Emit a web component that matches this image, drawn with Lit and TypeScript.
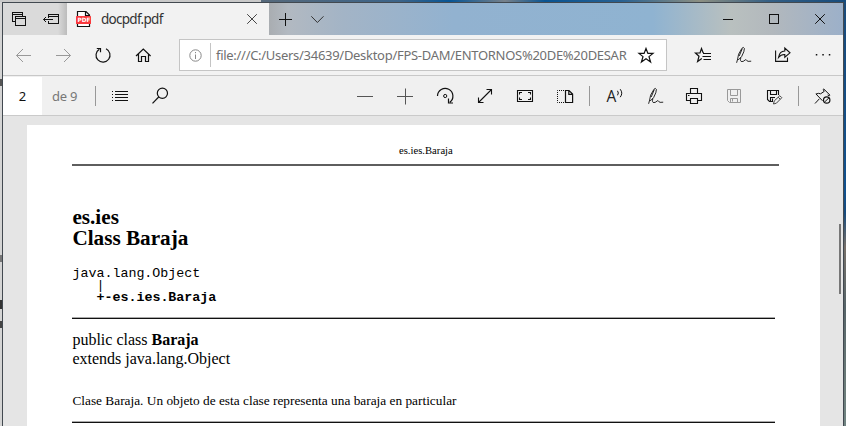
import { LitElement, html, css, svg } from "lit";
import { customElement } from "lit/decorators.js";

const pen = svg`<path stroke-width="0.9" d="M5.6 19.8L6.6 16.2L7.6 11.2L11 5.2Q12.6 3.6 13.4 5.4L12.8 8.8L10.6 13.6L7.2 17L6.6 16.2M11.2 5.8L8.2 13M9.8 14.5Q8.8 18.8 11 18.6T14.2 16.8Q15.4 16.4 15.8 17.6T20.2 18.2"/>`;

const glyphs: Record<string, unknown> = {
  back: svg`<path d="M19 12.5H4.5M11 6L4.5 12.5L11 19"/>`,
  forward: svg`<path d="M4 12.5H18.5M12 6L18.5 12.5L12 19"/>`,
  refresh: svg`<path stroke-width="1.2" d="M14 5.8A7 7 0 1 1 7.3 6.2M4.8 5.5H8.5V9.3"/>`,
  home: svg`<path stroke-width="1.2" d="M4 13L11.3 6L18.6 13M6.5 11V18.5H9.5V13.5H13.5V18.5H16.5V11"/>`,
  info: svg`<circle cx="12.5" cy="12.5" r="5.7"/><path d="M12.5 11.5V16M12.5 9V10.2"/>`,
  star: svg`<path stroke-width="1.2" d="M12 5.5L13.9 10.4H19L15 13.6L16.6 19L12 15.8L7.4 19L9 13.6L5 10.4H10.1Z"/>`,
  hub: svg`<path stroke-width="1.2" d="M12.8 9.5L12 9.5L10.5 5.5L9 10H4.5L8 13.2L6.6 18.5L10.8 15.5"/><path d="M12 10.5H20M11.5 13.5H20M12.5 16.5H20"/>`,
  pen,
  share: svg`<path stroke-width="1.1" d="M4.6 7.5V18.4H16.5V14.5M7.5 14.5Q8.5 8 13.8 8V5L19 9.8L13.8 14.2V11.5Q10 11.3 7.5 14.5Z"/>`,
  dots: svg`<path stroke="none" fill="#111" d="M4.8 11h1.5v1.5h-1.5zM11.3 11h1.5v1.5h-1.5zM17.8 11h1.5v1.5h-1.5z"/>`,
  list: svg`<path shape-rendering="crispEdges" d="M7 7.5H20M7 10.5H20M7 13.5H20M7 16.5H20M4 7.5H5M4 10.5H5M4 13.5H5M4 16.5H5"/>`,
  search: svg`<circle stroke-width="1.2" cx="14.4" cy="9.3" r="5.1"/><path stroke-width="1.2" d="M10.7 13L4.5 19.3"/>`,
  minus: svg`<path stroke="#555" d="M4 12.5H20"/>`,
  plus: svg`<path stroke="#555" d="M4 12.5H20M12.5 4.5V20.5"/>`,
  rotate: svg`<path stroke-width="1.2" d="M4.5 12A7.7 7.7 0 1 1 16.8 18.3M15.5 14.5V19H20"/><circle cx="12.2" cy="12" r="1.6"/>`,
  expand: svg`<path stroke-width="1.1" d="M5.5 18.5L18.5 5.5M13.5 5.5H18.5V10.5M5.5 13.5V18.5H10.5"/>`,
  fit: svg`<path stroke-width="1.1" d="M4.5 6.5H19.5V17.5H4.5ZM6.5 10.5V8.5H9M15 8.5H17.5V10.5M17.5 13.5V15.5H15M9 15.5H6.5V13.5"/>`,
  pages: svg`<path stroke-dasharray="1 1" d="M11 6.5H4.5V18.5H11"/><path stroke-width="1.2" d="M12.5 6.5H16L19.6 10V18.5H12.5ZM15.8 6.5V10.3H19.6"/>`,
  read: svg`<text x="3.6" y="18.4" class="letter">A</text><path d="M14.5 6.8Q16.2 9 14.5 11.3M17.2 5.2Q20.3 9.2 17.2 13.2"/>`,
  print: svg`<path stroke-width="1.1" d="M7.5 9.5V4.5H14.5V9.5M7.5 16.5H3.5V9.5H18.5V16.5H14.5M7.5 14.5H14.5V19.5H7.5ZM5 11.5H6.5"/>`,
  save: svg`<path stroke="#999" d="M4.5 5.5H17.5V18.5H6.5L4.5 16.5ZM7.5 6V11.5H14.5V6M7.5 18.5V14.5H14.5V18.5M9.5 15V17.5"/>`,
  saveEdit: svg`<path stroke-width="1.1" d="M10 17.5H6.5L4.5 15.5V6.5H15.5V11M7.5 6.5V10.5H13.5V6.5M7.5 17.5V13.5H12M9.5 14.5V17"/><path stroke="#444" d="M10.5 20L11.2 17L16.8 11.7L18.8 13.7L13.4 19.2ZM15.2 13.2L17.2 15.2"/>`,
  pin: svg`<path d="M4 19.5L8.4 14.8M4.8 9.8L11.5 16.8M5 10Q7.8 8.8 9.6 9.8L13.2 7.4L12.2 5.4L12.8 5L19 11.2L18.4 11.8L16.6 11"/><circle stroke-width="1.2" cx="15.7" cy="16" r="3.2"/><path d="M13.4 18.2L18 13.8"/>`,
  tabs: svg`<path shape-rendering="crispEdges" d="M8 14.5H5.5V5.5H15.5V9M5.5 7.5H15.5M8.5 9.5H18.5V18.5H8.5ZM8.5 11.5H18.5"/>`,
  aside: svg`<path shape-rendering="crispEdges" d="M9.5 10.5V7.5H19.5V16.5H9.5V14M9.5 9.5H19.5"/><path d="M14 12.5H4.5M7 10L4.5 12.5L7 15"/>`,
  close: svg`<path d="M7.2 7.2L16.8 16.8M16.8 7.2L7.2 16.8"/>`,
  newTab: svg`<path shape-rendering="crispEdges" d="M6 12.5H19M12.5 6V19"/>`,
  chevron: svg`<path d="M6.3 9.3L12.4 15.5L18.5 9.3"/>`,
  min: svg`<path shape-rendering="crispEdges" d="M7 12.5H17"/>`,
  max: svg`<path shape-rendering="crispEdges" d="M7.5 7.5H16.5V16.5H7.5Z"/>`,
  pdf: svg`<path fill="#fff" stroke="#111" stroke-width="1.2" d="M5.5 4.5H14L17.5 8V19.5H5.5ZM13.5 4.5V8.5H17.5"/><rect x="4" y="9" width="15" height="8" rx=".6" fill="#f9383c" stroke="none"/><text x="5.5" y="15.1" class="pdf">PDF</text>`,
};

@customElement("glyph-icon")
class GlyphIcon extends LitElement {
  static properties = { name: { type: String } };
  declare name: string;
  static styles = css`
    :host { display: flex; width: 40px; flex: none; align-items: center; justify-content: center; color: #111; }
    svg { width: 24px; height: 24px; fill: none; stroke: currentColor; stroke-width: 1; overflow: visible; }
    .letter { font: 15.5px "Open Sans", sans-serif; fill: #222; stroke: none; }
    .pdf { font: bold 5.8px "DejaVu Sans", sans-serif; fill: #fff; stroke: none; }
  `;
  render() {
    return html`<svg viewBox="0 0 24 24">${glyphs[this.name]}</svg>`;
  }
}

const icons = (names: string[]) => names.map((n) => html`<glyph-icon name=${n}></glyph-icon>`);

@customElement("app-root")
class AppRoot extends LitElement {
  static styles = css`
    :host {
      display: flex; box-sizing: border-box; width: 846px; height: 426px; overflow: hidden; padding: 2px 2px 0;
      font-family: "Noto Sans", "Open Sans", sans-serif; color: #222;
      background:
        linear-gradient(90deg, #c9c9c9 0 261px, #56697b 261px, #3c6489 400px, #075595 450px, #77818b 505px, #095492 545px, #286192 620px, #8c8f82 700px, #345f85 770px, #164b7c 846px) 0 0 / 100% 2px no-repeat,
        linear-gradient(#1b4b7a, #11518e 45%, #174b7d 50%, #777069 58%, #566468 72%, #6b7b79 90%, #718482) right / 3px 100% no-repeat,
        linear-gradient(#555, #555) 0 79px / 2px 7px no-repeat,
        linear-gradient(#777, #777) 0 255px / 2px 7px no-repeat,
        linear-gradient(#333, #333) 0 300px / 2px 9px no-repeat,
        linear-gradient(#444, #444) 0 321px / 2px 7px no-repeat,
        #d4d4d4;
    }
    .window { box-sizing: border-box; width: 842px; height: 424px; border: 1px solid #424950; border-bottom: 0; display: flex; flex-direction: column; background: #e5e5e5; }
    .tabs { display: flex; height: 32px; flex: none; background: linear-gradient(90deg, #d5d5d5 0 200px, #a9adb1 266px, #b2b9c1 285px, #a3b4c6 340px, #92b2d0 450px, #8fb3d1 650px, #b9c0bf 728px, #b2b8bd 770px, #9cb0c9 840px); }
    .tools { display: flex; width: 64px; background: linear-gradient(90deg, #dadada 55px, #bcbcbc); }
    .tools glyph-icon { width: 32px; }
    .tab { display: flex; width: 202px; align-items: center; background: #f2f2f2; }
    .tab .kind { width: 34px; }
    .tab .close { width: 34px; color: #444; }
    .title { flex: 1; font-size: 13.5px; line-height: 20px; letter-spacing: -0.72px; color: #333; }
    .tabs .new { width: 32px; }
    .tabs .more { width: 32px; color: #333; }
    .controls { display: flex; margin-left: auto; }
    .controls glyph-icon { width: 46px; }
    .nav { display: flex; height: 40px; flex: none; background: #f2f2f2; border-bottom: 1px solid #c8c8c8; }
    .arrows { display: flex; padding-left: 1px; width: 175px; }
    .dim { color: #999; }
    .address { box-sizing: border-box; display: flex; align-items: center; width: 488px; height: 32px; margin-top: 4px; border: 1px solid #c5c5c5; background: #fff; }
    .address .info { width: 30px; color: #888; }
    .divider { width: 1px; height: 24px; background: #c4c4c4; }
    .url { box-sizing: border-box; width: 417px; padding-left: 5px; font-size: 13px; letter-spacing: -0.29px; white-space: nowrap; color: #707070; line-height: 20px; }
    .address .fav { width: 36px; }
    .actions { display: flex; margin-left: auto; }
    .bar { box-sizing: border-box; display: flex; align-items: center; height: 40px; flex: none; background: #f0f0f0; border-bottom: 1px solid #cacaca; font-size: 13px; }
    .current { display: flex; align-items: center; justify-content: center; width: 39px; height: 38px; margin-top: 1px; background: #fff; color: #111; }
    .total { box-sizing: border-box; width: 53px; padding-left: 10px; letter-spacing: -0.25px; color: #777; }
    .sep { width: 1px; height: 20px; background: #989898; flex: none; }
    .group { display: flex; padding: 0 4px; }
    .zoom { margin-left: auto; }
    .voice { padding: 0 3px 0 5px; }
    .pinned { padding-right: 0; }
    .view { display: flex; flex: 1; min-height: 0; overflow: hidden; padding: 9px 2px 0 24px; }
    .page { box-sizing: border-box; width: 793.4px; height: 301px; padding: 0 45px 0 45.4px; background: #fff; font-family: "Liberation Serif", serif; color: #000; }
    .running { height: 39px; box-sizing: border-box; padding-top: 19px; font-size: 10.67px; line-height: 13px; text-align: center; margin-right: -4px; }
    .line { height: 2px; width: 703px; background: linear-gradient(#aaa 50%, #111 50%); }
    .line.head { width: 707px; background: #5e5e5e; }
    h1 { margin: 41px 0 0; font-size: 21.2px; line-height: 21px; font-weight: bold; }
    pre { margin: 19px 0 0; height: 49px; font: 13.33px/12px "Liberation Mono", monospace; }
    .sign { margin-top: 11px; font-size: 16px; line-height: 19px; }
    .desc { margin: 25px 0 0; height: 28px; font-size: 13.33px; line-height: 16px; }
    .scroll { width: 2px; height: 70px; margin: 99px 0 0 auto; background: #777; }
  `;
  render() {
    return html`
      <div class="window">
        <div class="tabs">
          <div class="tools">${icons(["tabs", "aside"])}</div>
          <div class="tab">
            <glyph-icon class="kind" name="pdf"></glyph-icon>
            <span class="title">docpdf.pdf</span>
            <glyph-icon class="close" name="close"></glyph-icon>
          </div>
          <glyph-icon class="new" name="newTab"></glyph-icon>
          <glyph-icon class="more" name="chevron"></glyph-icon>
          <div class="controls">${icons(["min", "max", "close"])}</div>
        </div>
        <div class="nav">
          <div class="arrows">
            <glyph-icon class="dim" name="back"></glyph-icon>
            <glyph-icon class="dim" name="forward"></glyph-icon>
            ${icons(["refresh", "home"])}
          </div>
          <div class="address">
            <glyph-icon class="info" name="info"></glyph-icon>
            <span class="divider"></span>
            <span class="url">file:///C:/Users/34639/Desktop/FPS-DAM/ENTORNOS%20DE%20DESAR</span>
            <glyph-icon class="fav" name="star"></glyph-icon>
          </div>
          <div class="actions">${icons(["hub", "pen", "share", "dots"])}</div>
        </div>
        <div class="bar">
          <span class="current">2</span>
          <span class="total">de 9</span>
          <span class="sep"></span>
          <div class="group">${icons(["list", "search"])}</div>
          <div class="group zoom">${icons(["minus", "plus", "rotate", "expand", "fit", "pages"])}</div>
          <span class="sep"></span>
          <div class="group voice">${icons(["read", "pen", "print", "save", "saveEdit"])}</div>
          <span class="sep"></span>
          <div class="group pinned">${icons(["pin"])}</div>
        </div>
        <div class="view">
          <div class="page">
            <div class="running">es.ies.Baraja</div>
            <div class="line head"></div>
            <h1>es.ies<br />Class Baraja</h1>
            <pre>java.lang.Object
   |
   <b>+-es.ies.Baraja</b></pre>
            <div class="line"></div>
            <div class="sign">public class <b>Baraja</b><br />extends java.lang.Object</div>
            <p class="desc">Clase Baraja. Un objeto de esta clase representa una baraja en particular</p>
            <div class="line"></div>
          </div>
          <div class="scroll"></div>
        </div>
      </div>
    `;
  }
}
